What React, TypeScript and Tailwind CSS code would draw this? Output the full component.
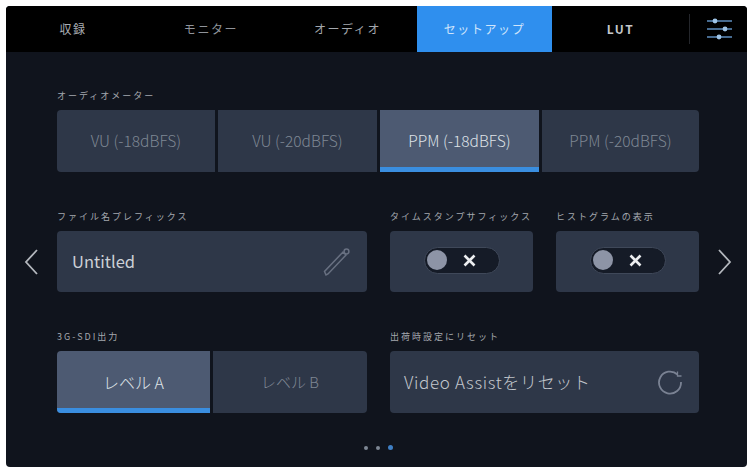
import React from 'react';

const jp = { fontFamily: '"Noto Sans CJK JP", "Noto Sans", sans-serif' };

const tabs = [
  { label: '収録', w: 'w-[134px]', cls: 'text-[#a9adb3]' },
  { label: 'モニター', w: 'w-[136px]', cls: 'text-[#8f939a] pl-[6px]' },
  { label: 'オーディオ', w: 'w-[141px]', cls: 'text-[#a3a7ad] pl-[2px]' },
  { label: 'セットアップ', w: 'w-[135px]', cls: 'text-[#cfe4fb] bg-[#2f8fee]' },
  { label: 'LUT', w: 'w-[137px]', cls: 'text-[#c4c7cb] font-bold' },
];

const Label: React.FC<{ children: React.ReactNode }> = ({ children }) => (
  <div className="h-[21px] text-[9px] leading-[14px] tracking-[2px] text-[#a4a8ae] whitespace-nowrap" style={jp}>
    {children}
  </div>
);

const Seg: React.FC<{ text: string; active?: boolean; cls?: string; textCls?: string }> = ({ text, active, cls, textCls }) => (
  <div
    className={`relative h-full flex items-center justify-center overflow-hidden font-light ${cls ?? ''} ${
      active ? 'bg-[#4d5a72] text-[#dfe3e8]' : 'bg-[#2e3748] text-[#7f8794]'
    } ${textCls ?? 'text-[15.5px]'}`}
    style={jp}
  >
    {text}
    {active && <div className="absolute left-0 right-0 bottom-0 h-[5px] bg-[#3a8ee0]" />}
  </div>
);

const Toggle = () => (
  <div className="w-[76px] h-[27px] mb-[3px] rounded-full bg-[#151b27] border border-[#3f4859] flex items-center pl-[2px]">
    <div className="w-[20px] h-[20px] rounded-full bg-[#8d94a6]" />
    <svg width="13" height="13" viewBox="0 0 13 13" className="ml-[16px]">
      <path d="M1.5 1.5 L11.5 11.5 M11.5 1.5 L1.5 11.5" stroke="#eceef0" strokeWidth="2.6" />
    </svg>
  </div>
);

export default function App() {
  return (
    <div className="w-[754px] h-[470px] bg-white pt-[6px] pl-[6px]">
      <div className="w-[741px] h-[461px] rounded-[4px] bg-[#10141d] overflow-hidden flex flex-col">
        <div className="h-[46px] bg-black flex items-stretch text-[12px] tracking-[1.6px] shrink-0" style={jp}>
          {tabs.map(t => (
            <div key={t.label} className={`${t.w} flex items-center justify-center ${t.cls}`}>
              {t.label}
            </div>
          ))}
          <div className="flex-1 flex items-center">
            <div className="w-px h-[30px] bg-[#24262b]" />
            <svg width="27" height="22" viewBox="0 0 27 22" className="ml-[16px]" fill="none">
              <g stroke="#5f8fc0" strokeWidth="1.4">
                <path d="M1 3 H26 M1 11 H26 M1 19 H26" />
              </g>
              <circle cx="9" cy="3" r="2.4" fill="#9fc4e6" />
              <circle cx="19" cy="11" r="2.4" fill="#9fc4e6" />
              <circle cx="13" cy="19" r="2.4" fill="#9fc4e6" />
            </svg>
          </div>
        </div>

        <div className="relative flex-1 pl-[51px] pt-[37px]">
          <Label>オーディオメーター</Label>
          <div className="flex w-[642px] h-[62px] rounded-[4px] overflow-hidden gap-[3px]">
            <Seg text="VU (-18dBFS)" cls="w-[158px]" />
            <Seg text="VU (-20dBFS)" cls="w-[159px]" />
            <Seg text="PPM (-18dBFS)" active cls="w-[159px]" />
            <Seg text="PPM (-20dBFS)" cls="flex-1" />
          </div>

          <div className="flex gap-[23px] mt-[38px]">
            <div className="w-[310px]">
              <Label>ファイル名プレフィックス</Label>
              <div className="h-[61px] rounded-[4px] bg-[#2e3748] flex items-center justify-between pl-[15px] pr-[16px]">
                <span className="text-[16.5px] text-[#ccd0d6]" style={jp}>Untitled</span>
                <svg width="28" height="30" viewBox="0 0 28 30" fill="none" stroke="#687081" strokeWidth="1.5">
                  <path d="M3 28 L1.5 24.5 L20 5 L23 8 L5 27 Z" />
                  <circle cx="23.5" cy="4.5" r="2.4" />
                </svg>
              </div>
            </div>
            <div className="w-[143px]">
              <Label>タイムスタンプサフィックス</Label>
              <div className="h-[61px] rounded-[4px] bg-[#2e3748] flex items-center justify-center">
                <Toggle />
              </div>
            </div>
            <div className="w-[143px]">
              <Label>ヒストグラムの表示</Label>
              <div className="h-[61px] rounded-[4px] bg-[#2e3748] flex items-center justify-center">
                <Toggle />
              </div>
            </div>
          </div>

          <div className="flex gap-[23px] mt-[38px]">
            <div className="w-[310px]">
              <Label>3G-SDI出力</Label>
              <div className="flex h-[62px] rounded-[4px] overflow-hidden gap-[3px]">
                <Seg text="レベル A" active cls="w-[153px]" textCls="text-[16px]" />
                <Seg text="レベル B" cls="flex-1" textCls="text-[15px]" />
              </div>
            </div>
            <div className="w-[309px]">
              <Label>出荷時設定にリセット</Label>
              <div className="h-[62px] rounded-[4px] bg-[#2e3748] flex items-center justify-between pl-[14px] pr-[16px]">
                <span className="text-[17px] tracking-[0.65px] font-light text-[#c3c7cd]" style={jp}>Video Assistをリセット</span>
                <svg width="26" height="26" viewBox="0 0 26 26" fill="none" stroke="#7a8293" strokeWidth="1.8">
                  <path d="M20.5 5.5 A11 11 0 1 0 24 13" />
                  <path d="M20.5 2.5 V7 H24.5" strokeWidth="1.3" />
                </svg>
              </div>
            </div>
          </div>

          <div className="flex justify-center items-center gap-[8px] mt-[32px] w-[642px]">
            <div className="w-[4px] h-[4px] rounded-full bg-[#7e8794]" />
            <div className="w-[4px] h-[4px] rounded-full bg-[#7e8794]" />
            <div className="w-[5px] h-[5px] rounded-full bg-[#3f7fc4]" />
          </div>

          <svg width="16" height="28" viewBox="0 0 16 28" fill="none" stroke="#b4b8be" strokeWidth="1.8" className="absolute left-[17px] top-[196px]">
            <path d="M14 2 L3 14 L14 26" />
          </svg>
          <svg width="16" height="28" viewBox="0 0 16 28" fill="none" stroke="#b4b8be" strokeWidth="1.8" className="absolute left-[711px] top-[196px]">
            <path d="M2 2 L13 14 L2 26" />
          </svg>
        </div>
      </div>
    </div>
  );
}
